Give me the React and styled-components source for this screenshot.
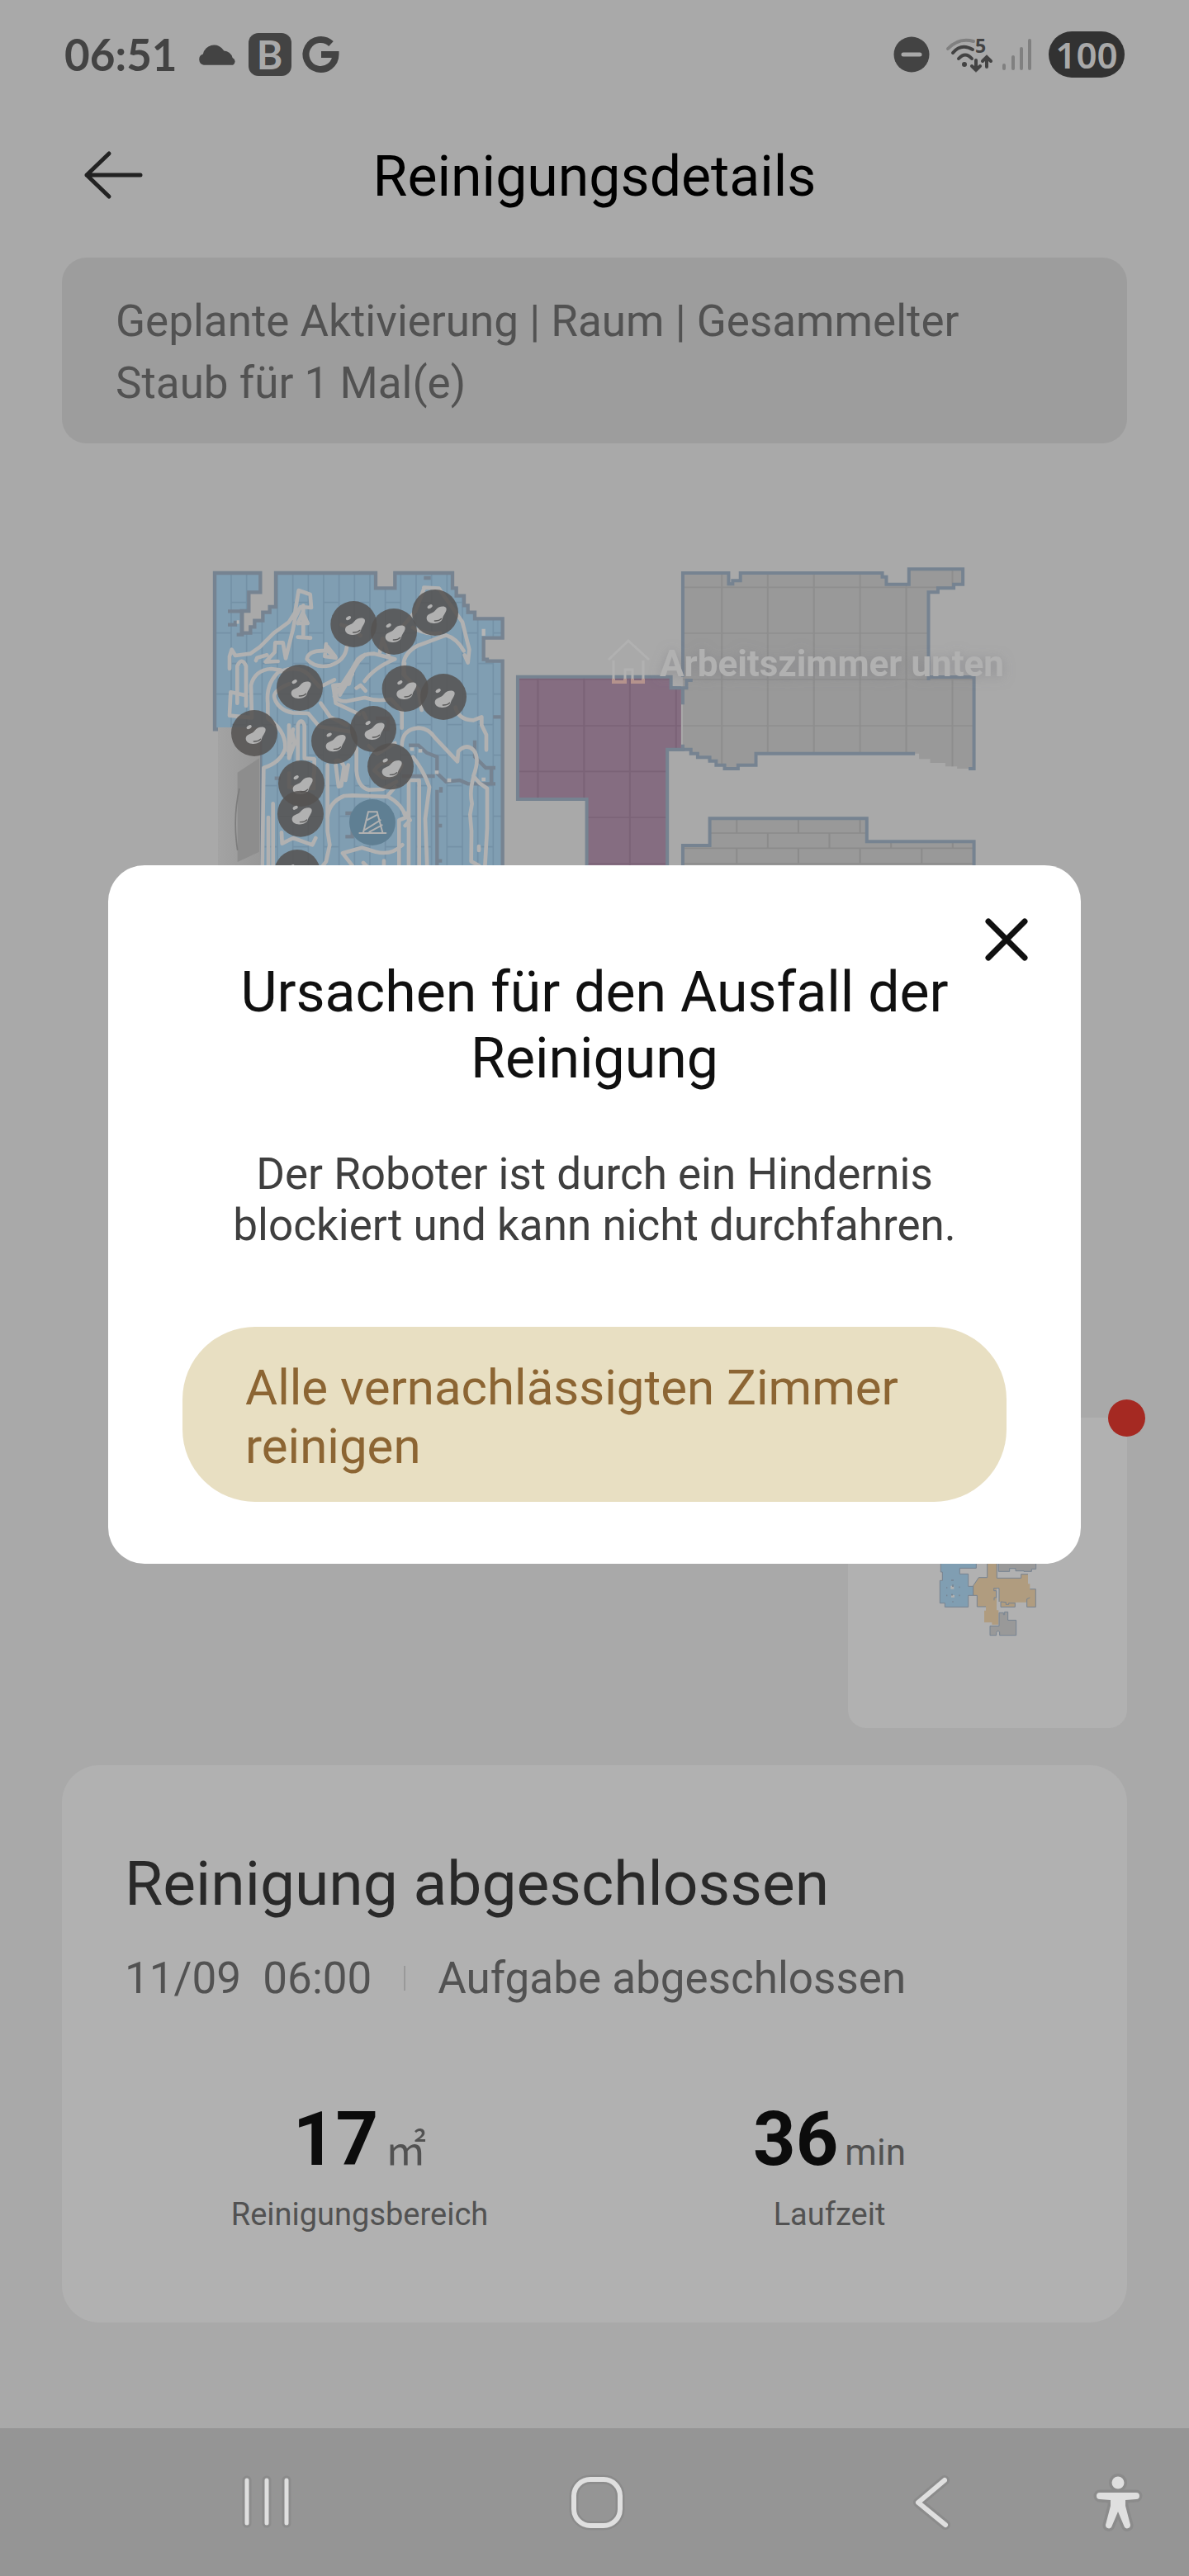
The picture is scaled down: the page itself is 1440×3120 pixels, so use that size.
import React from "react";
import styled, { createGlobalStyle } from "styled-components";

const GlobalStyle = createGlobalStyle`
  * { box-sizing: border-box; }
  body { margin: 0; background: #a9a9a9; font-family: Roboto, "Liberation Sans", sans-serif; }
  h1, h2, p, dl, dd, dt { margin: 0; font-weight: 400; }
  button { font: inherit; border: 0; padding: 0; background: none; cursor: pointer; }
  svg { display: block; overflow: visible; }
`;

const Screen = styled.div`
  position: relative;
  display: flex;
  flex-direction: column;
  min-height: 100vh;
  background: #a9a9a9;
`;

const StatusBar = styled.header`
  display: flex;
  align-items: center;
  justify-content: space-between;
  height: 132px;
  padding: 0 78px;
  color: #434343;
`;

const StatusGroup = styled.div`
  display: flex;
  align-items: center;
  gap: ${(p) => p.$gap}px;
`;

const Clock = styled.time`
  font: 700 53px/60px Lato, sans-serif;
  margin-right: 11px;
`;

const AppBadge = styled.span`
  display: grid;
  place-items: center;
  width: 52px;
  height: 52px;
  border-radius: 12px;
  background: #434343;
  color: #a9a9a9;
  font: 700 48px/52px Lato, sans-serif;
`;

const Battery = styled.span`
  display: grid;
  place-items: center;
  width: 92px;
  height: 56px;
  border-radius: 28px;
  background: #323232;
  color: #a9a9a9;
  font: 600 44px/56px "Noto Sans", sans-serif;
`;

const TitleBar = styled.div`
  display: grid;
  grid-template-columns: 72px 1fr 72px;
  align-items: center;
  height: 160px;
  margin-bottom: 20px;
  padding: 0 101px;
`;

const PageTitle = styled.h1`
  padding-top: 3px;
  text-align: center;
  font-size: 68px;
  line-height: 80px;
  color: #000;
`;

const Notice = styled.p`
  margin: 0 75px;
  padding: 40px 65px 35px;
  border-radius: 30px;
  background: #9d9d9d;
  color: #525252;
  font-size: 53px;
  line-height: 75px;
`;

const MapArea = styled.div`
  svg { width: 100%; height: auto; overflow: hidden; }
`;

const ThumbRow = styled.div`
  display: flex;
  justify-content: flex-end;
  margin: 0 75px 45px;
`;

const Thumb = styled.button`
  position: relative;
  width: 338px;
  height: 376px;
  border-radius: 22px;
  background: #b1b1b1;
`;

const Dot = styled.span`
  position: absolute;
  top: -22px;
  right: -22px;
  width: 45px;
  height: 45px;
  border-radius: 50%;
  background: #a52922;
`;

const Summary = styled.section`
  margin: 0 75px 128px;
  padding: 93px 76px 108px;
  border-radius: 45px;
  background: #b1b1b1;
`;

const SummaryTitle = styled.h2`
  font-size: 75px;
  line-height: 100px;
  color: #292929;
`;

const Meta = styled.div`
  display: flex;
  align-items: center;
  margin-top: 34px;
  font-size: 53px;
  line-height: 62px;
  color: #525252;
  white-space: pre;
`;

const Divider = styled.span`
  width: 2px;
  height: 30px;
  margin: 0 39px;
  background: #999;
`;

const Stats = styled.dl`
  display: grid;
  grid-template-columns: 1fr 1fr;
  margin-top: 112px;
`;

const Stat = styled.div`
  display: flex;
  flex-direction: column-reverse;
  align-items: center;
`;

const StatLabel = styled.dt`
  margin-top: 14px;
  font-size: 38px;
  line-height: 46px;
  color: #525252;
`;

const StatValue = styled.dd`
  display: flex;
  align-items: baseline;
  gap: 8px;
  font-size: 90px;
  line-height: 106px;
  font-weight: 700;
  color: #0c0c0c;
`;

const Unit = styled.span`
  font-family: Roboto, "Noto Sans CJK JP", sans-serif;
  font-size: ${(p) => (p.$symbol ? 50 : 44)}px;
  line-height: 50px;
  font-weight: 400;
  color: #525252;
`;

const NavBar = styled.nav`
  display: grid;
  grid-template-columns: 353px 1fr 353px;
  align-items: center;
  height: 180px;
  margin-top: auto;
  background: #959595;
`;

const NavSlot = styled.div`
  display: flex;
  justify-content: ${(p) => p.$justify};
  gap: 172px;
  padding: ${(p) => p.$pad};
`;

const Scrim = styled.div`
  position: absolute;
  inset: 0 0 180px;
  display: grid;
  align-items: center;
  padding: 0 131px;
`;

const Dialog = styled.section`
  position: relative;
  padding: 114px 90px 75px;
  border-radius: 44px;
  background: #fff;
  text-align: center;
`;

const Close = styled.button`
  position: absolute;
  top: 62px;
  right: 62px;
`;

const DialogTitle = styled.h2`
  font-size: 68px;
  line-height: 80px;
  color: #101010;
`;

const DialogText = styled.p`
  margin: 69px 0 92px;
  font-size: 53px;
  line-height: 62px;
  color: #3f3f3f;
`;

const Action = styled.button`
  && {
    width: 100%;
    padding: 38px 76px 32px;
    border-radius: 88px;
    background: #e8dfc2;
    color: #8c6533;
    font-size: 60px;
    line-height: 71px;
    text-align: left;
  }
`;

const wall = "#768391";
const track = "#b1b1b1";

const stains = [
  [565, 258], [711, 285], [861, 216], [369, 489], [752, 492], [891, 522], [204, 654],
  [495, 682], [636, 639], [699, 775], [375, 837], [372, 947], [360, 1161],
];

const tracks = [
  "M114 420L114 375L122 350L135 372L190 365L225 340L275 290L330 250L352 215L365 135L407 150L411 198L372 195L352 235L345 275L318 382L308 325L280 325L278 360L245 395L290 393M210 390L214 380L250 370",
  "M382 190L382 300M362 255L380 215L398 255L362 255M362 305L408 308",
  "M142 545L142 410Q158 375 174 410L174 555M114 590L118 505L174 517M114 590L195 598L192 480Q205 425 265 420L300 425Q245 470 253 545L253 600Q320 645 316 710Q300 760 238 780L233 1140",
  "M300 430Q360 405 400 440L440 485M330 475Q270 500 277 525Q290 570 345 580L400 582L440 630Q500 640 560 650M445 545L480 595L540 625M455 480L495 460",
  "M540 340Q535 390 480 408Q425 420 395 385Q400 350 470 355L500 380L460 375L465 330M470 340L498 375",
  "M495 520L560 420L580 385Q600 365 640 365L715 385Q640 415 605 465M605 370Q560 410 548 475L490 480L500 545L585 585M500 490Q490 540 540 538L605 525Q650 540 700 530L740 575L740 635M575 490L590 480L608 500M560 440L515 515M660 360L670 310L695 380M520 260Q560 270 590 300",
  "M820 125L875 128L900 165L960 250L985 350L980 398L968 370M820 130L790 210L740 270M750 440Q730 370 800 335L900 298Q940 310 965 355M780 270Q830 300 880 290M750 400L745 440L800 495L812 570",
  "M935 560Q945 605 1000 607L1030 595L1030 625L1047 660L1047 715M740 700Q740 640 800 635Q835 635 860 670L942 757L945 720Q975 690 1000 715Q1025 745 1000 810L1022 835L1050 855L1050 1000L1042 1140M1000 815Q985 870 995 910L988 950L993 1010L992 1120L1020 1135M1020 1065L1020 1080",
  "M330 625L330 745L350 690L342 650M362 750L362 625Q374 595 386 625L386 745L422 748L422 800M345 640L328 720M470 770L470 1010L478 1060L465 1120L450 1140M500 755Q515 745 530 775L520 845L510 848L500 770M545 770L535 825M575 710L575 790Q580 850 620 860L670 858L720 830",
  "M272 910L272 1140M255 960L255 1140M303 1015L305 1055L345 1035L415 1060L427 1035M470 960Q475 905 530 882L560 880L690 885Q740 910 755 960L730 970L730 1140M690 880L715 850M755 945L770 970L752 990M765 830L765 1140M765 825L803 825L803 1140M780 740Q820 790 840 850L825 965L832 1140M742 1060Q700 1100 645 1085L595 1070L525 1090L560 1135M600 1125L615 1140M675 1118L675 1140",
  "M640 790Q670 740 740 770Q720 820 670 815L640 790M330 800L330 850L420 855L420 800M600 580L610 600M620 700L650 730L715 690",
];

const planks = [];
for (let c = 0; c < 19; c += 1) {
  const x = 64 + c * 56;
  planks.push(`M${x} 70V1140`);
  for (let r = 1; r < 10; r += 1) {
    if ((c + r) % 2 === 0) planks.push(`M${x} ${68 + r * 111}h56`);
  }
}

const bricks = [];
[[964, 1017, 716], [1017, 1072, 808], [1072, 1128, 716]].forEach(([top, bottom, start]) => {
  bricks.push(`M556 ${bottom}H1420`);
  for (let x = start; x < 1420; x += 183) bricks.push(`M${x} ${top}V${bottom}`);
});

const blueRoom =
  "M60 640V72H226V142H184V210H158V290H190V268H205V245H235V215H260V195H282V72H645V127H715V72H924V127H938V155H966V190H980V215H1005V238H1106V308H1037V386H1050V392H1106V1150H225V640Z";
const greyRoom =
  "M556 713V72H692V105H727V72H1148V86H1160V113H1227V58H1387V113H1360V127H1313V142H1285V450H1420V783H1370V775H1335V762H1290V748H1257V728H773V770H720V783H680V770H655V755H630V742H600V728H580V713Z";
const greyWalls =
  "M556 449V72H692V112H704V100H727V72H1148V86H1160V113H1227V58H1387V113H1360V127H1313V142H1285V462M1285 450H1420V783H1404M1245 728H773V770H720V783H680V770H655V755H636V742H600V728H580V713H510M556 490V550M521 490H567V462H585";
const purpleRoom = "M66 449H521V490H551V713H510V1150H271V894H66Z";
const lowerRoom = "M556 1150V1062H636V964H1102V1048H1420V1150Z";

function Stain({ x, y }) {
  return (
    <g transform={`translate(${x} ${y})`}>
      <circle r="84" fill="#555352" fillOpacity=".86" />
      <ellipse cx="-19" cy="-22" rx="10" ry="6" transform="rotate(-30 -19 -22)" fill={track} />
      <path d="M2-10C10-22 34-27 40-17C45-6 30 8 27 20C24 34 6 41-10 38C-26 37-34 24-30 14C-26 2-8 4 2-10Z" fill={track} />
      <path d="M-2 30Q14 31 23 22" stroke="#5b5b5b" strokeWidth="4" fill="none" strokeLinecap="round" />
    </g>
  );
}

function FloorMap() {
  return (
    <svg viewBox="0 537 1440 1180" role="img" aria-label="Karte">
      <defs>
        <clipPath id="blue"><path d={blueRoom} /></clipPath>
        <clipPath id="grey"><path d={greyRoom} /></clipPath>
        <clipPath id="purple"><path d={purpleRoom} /></clipPath>
        <clipPath id="lower"><path d={lowerRoom} /></clipPath>
        <linearGradient id="slab">
          <stop offset="0" stopColor="#a3a3a3" />
          <stop offset="1" stopColor="#989898" />
        </linearGradient>
        <filter id="soft" x="-10%" y="-40%" width="120%" height="180%">
          <feDropShadow dx="0" dy="2" stdDeviation="7" floodColor="#77777f" floodOpacity=".5" />
        </filter>
      </defs>
      <g transform="translate(240 670) scale(.33333)" fill="none">
        <path d={blueRoom} fill="#809eb2" />
        <path d={planks.join("")} clipPath="url(#blue)" stroke="#7491a6" strokeWidth="5" />
        <path d={blueRoom} stroke={wall} strokeWidth="13" />
        <path d="M108 211H160V296H140M108 260H135V245M820 90H845M1072 595H1100M765 698H800L830 725L868 740V800L900 830L950 825L980 838H1080M1005 680V740L1045 780H1080M1065 780V838M868 860V1140M740 810H860M882 850V870M868 990H886M868 1118H886M278 818H300M645 600H690V640H670M535 945H560V1030H535" stroke={wall} strokeWidth="13" />
        <path d="M140 250h9M770 712h14M800 718h14M860 796h14M905 825h14M1030 822h14M1037 275V300" stroke="#b5b5b5" strokeWidth="13" />
        <path d="M72 633H225V1150H72Z" fill="url(#slab)" />
        <path d="M143 797L222 745V1085L143 1122Z" fill="#8d8d8d" />
        <path d="M150 855Q125 960 143 1080" stroke="#7c7c7c" strokeWidth="5" />
        <g stroke={track} strokeWidth="14" strokeLinecap="round" strokeLinejoin="round">
          {tracks.map((d) => <path key={d} d={d} />)}
        </g>
        <circle cx="633" cy="978" r="84" fill="#5f7f93" />
        <path d="M586 1017H682M600 1015L618 940H650L670 1015M613 970L652 950M606 1005L662 970M622 1013L668 988" stroke={track} strokeWidth="6" strokeLinecap="round" />
        {stains.map(([x, y]) => <Stain key={`${x}-${y}`} x={x} y={y} />)}
      </g>
      <g transform="translate(600 670) scale(.40816 .33333)" fill="none" strokeWidth="4">
        <path d={greyRoom} fill="#999" />
        <path d="M672 50V800M808 50V800M945 50V800M1082 50V800M1219 50V800M1356 50V800M550 124H1430M550 291H1430M550 459H1430M550 627H1430" clipPath="url(#grey)" stroke="#8e8e8e" strokeWidth="5" />
        <path d={greyWalls} stroke={wall} vectorEffect="non-scaling-stroke" />
        <path d={purpleRoom} fill="#856d81" />
        <path d="M126 440V900M263 440V900M399 440V1140M536 440V720M60 459H551M60 627H551M60 793H551M260 960H551M260 1128H551" clipPath="url(#purple)" stroke="#7b6377" strokeWidth="5" />
        <path d="M551 490H521V449H66V894H271V1150M510 1150V713H556V695" stroke={wall} vectorEffect="non-scaling-stroke" />
        <path d={lowerRoom} fill="#999" />
        <path d={bricks.join("")} clipPath="url(#lower)" stroke="#8b8b8b" strokeWidth="5" />
        <path d={lowerRoom} stroke={wall} vectorEffect="non-scaling-stroke" />
      </g>
      <path d="M737 799L761 776L786 799M743 800V826H757V811H766V826H779V800" fill="none" stroke={track} strokeWidth="3" />
      <path d="M743 822V826H757V822M766 822V826H779V822" fill="none" stroke="#b5938d" strokeWidth="4" />
      <text x="799" y="819" fontFamily="Roboto, sans-serif" fontWeight="700" fontSize="44" fill={track} filter="url(#soft)">
        Arbeitszimmer unten
      </text>
    </svg>
  );
}

function MiniMap() {
  return (
    <svg width="338" height="376" viewBox="81 111 1014 1128" stroke={wall} strokeWidth="3">
      <path fill="#809eb2" d="M418 560V672H424V703H415V785H433V799H518V757H536V724H518V679H487V658H547V560Z" />
      <path fill="#b09c7f" stroke="none" d="M587 560V692H556L536 722V757H550V798H582V812H576V855H604V863H628V811H621V731H630V780H636V798H690V782H731V799H763V734H742V715H735V680H710V694H622V560Z" />
      <path fill="none" d="M587 640V692H556L536 722V757H550V798H582M622 640V694H710V680H735M742 734H763V799H731V770L742 765M630 780V731H611V740H620V765H612V775M636 780V799H688V785H665V790H655V782Z" />
      <path fill="#999" d="M628 560V670H668V659H690V668H720V670H748V661H764V560Z" />
      <path fill="#999" d="M630 820H646V827H650V817H662V847H692V902H632V890L626 885L620 892V902H597V868H630Z" />
      <path d="M454 722h12v12h-12zM456 756h12v8h-12z" fill="#b1b1b1" stroke="none" />
      <path d="M456 702h9M462 718v8M438 729h4M484 727h4M438 757h4M484 757h4M460 780h4M456 755h6" strokeWidth="5" />
    </svg>
  );
}

export default function App() {
  return (
    <Screen>
      <GlobalStyle />
      <StatusBar>
        <StatusGroup $gap={14}>
          <Clock>06:51</Clock>
          <svg width="47" height="28" viewBox="0 0 48 28" fill="#434343" aria-hidden="true">
            <path d="M7 27A7 7 0 0 1 6 13.500A14 14 0 0 1 32 9.500A11 11 0 0 1 42.500 18A5 5 0 0 1 43 27Z" />
          </svg>
          <AppBadge>B</AppBadge>
          <svg width="44" height="44" viewBox="0 0 44 44" fill="none" stroke="#434343" strokeWidth="8" aria-hidden="true">
            <path d="M34 9A18 18 0 1 0 39.500 22H22" />
          </svg>
        </StatusGroup>
        <StatusGroup $gap={20}>
          <svg width="44" height="44" viewBox="0 0 44 44" aria-hidden="true">
            <circle cx="22" cy="22" r="21.500" fill="#434343" />
            <path d="M12 22H32" stroke="#a9a9a9" strokeWidth="5" strokeLinecap="round" />
          </svg>
          <StatusGroup $gap={12}>
            <svg width="56" height="44" viewBox="0 0 56 44" fill="none" strokeWidth="4" strokeLinecap="round" aria-hidden="true">
              <path d="M2 15Q15 1 33 6" stroke="#808080" />
              <path d="M8 20Q18 8 32 16M15 27Q23 18 31 27" stroke="#434343" />
              <path d="M36 29V41M31 36L36 41L41 36M49 37V25M44 30L49 25L54 30" stroke="#434343" />
              <circle cx="22" cy="34" r="3" fill="#434343" />
              <text x="35" y="20" fontFamily="Noto Sans, sans-serif" fontWeight="700" fontSize="23" fill="#434343">5</text>
            </svg>
            <svg width="36" height="40" viewBox="0 0 36 40" stroke="#808080" strokeWidth="4" strokeLinecap="round" aria-hidden="true">
              <path d="M2 33V37M13 23V37M23 13V37M33 3V37" />
            </svg>
          </StatusGroup>
          <Battery>100</Battery>
        </StatusGroup>
      </StatusBar>

      <TitleBar>
        <button type="button" aria-label="Zurück">
          <svg width="72" height="58" viewBox="0 0 72 58" fill="none" stroke="#222" strokeWidth="5" strokeLinecap="round" strokeLinejoin="round">
            <path d="M31 3L4 29L31 55M4 29H69" />
          </svg>
        </button>
        <PageTitle>Reinigungsdetails</PageTitle>
      </TitleBar>

      <Notice>Geplante Aktivierung | Raum | Gesammelter Staub für 1 Mal(e)</Notice>

      <MapArea><FloorMap /></MapArea>

      <ThumbRow>
        <Thumb type="button" aria-label="Kartenübersicht">
          <MiniMap />
          <Dot />
        </Thumb>
      </ThumbRow>

      <Summary>
        <SummaryTitle>Reinigung abgeschlossen</SummaryTitle>
        <Meta>
          <span>11/09  06:00</span>
          <Divider />
          <span>Aufgabe abgeschlossen</span>
        </Meta>
        <Stats>
          <Stat>
            <StatLabel>Reinigungsbereich</StatLabel>
            <StatValue>17<Unit $symbol>㎡</Unit></StatValue>
          </Stat>
          <Stat>
            <StatLabel>Laufzeit</StatLabel>
            <StatValue>36<Unit>min</Unit></StatValue>
          </Stat>
        </Stats>
      </Summary>

      <NavBar>
        <NavSlot $justify="flex-end" $pad="0">
          <button type="button" aria-label="Letzte Apps">
            <svg width="60" height="66" viewBox="0 0 60 66" strokeLinecap="round">
              <path d="M6 6V58M30 6V58M54 6V58" stroke="#8b8b8b" strokeWidth="11" />
              <path d="M6 6V58M30 6V58M54 6V58" stroke="#dfdfdf" strokeWidth="5" />
            </svg>
          </button>
        </NavSlot>
        <NavSlot $justify="center" $pad="0 0 0 6px">
          <button type="button" aria-label="Startseite">
            <svg width="68" height="68" viewBox="0 0 68 68" fill="none">
              <rect x="6" y="6" width="56" height="56" rx="20" stroke="#8b8b8b" strokeWidth="11" />
              <rect x="6" y="6" width="56" height="56" rx="20" stroke="#dfdfdf" strokeWidth="6" />
            </svg>
          </button>
        </NavSlot>
        <NavSlot $justify="flex-end" $pad="0 56px 0 0">
          <button type="button" aria-label="Zurück">
            <svg width="46" height="68" viewBox="0 0 46 68" fill="none" strokeLinecap="round" strokeLinejoin="round">
              <path d="M38 7L6 34L39 61" stroke="#8b8b8b" strokeWidth="12" />
              <path d="M38 7L6 34L39 61" stroke="#dfdfdf" strokeWidth="6" />
            </svg>
          </button>
          <button type="button" aria-label="Bedienungshilfen">
            <svg width="60" height="72" viewBox="0 0 60 72" strokeLinecap="round" strokeLinejoin="round" fill="#dfdfdf">
              <g stroke="#8b8b8b" strokeWidth="7">
                <circle cx="30" cy="12" r="7.500" />
                <path d="M8 24H52A4 4 0 0 1 52 32L39 33V40L45 63A4 4 0 0 1 38 66L30 47L22 66A4 4 0 0 1 15 63L21 40V33L8 32A4 4 0 0 1 8 24Z" />
              </g>
              <circle cx="30" cy="12" r="7.500" />
              <path d="M8 24H52A4 4 0 0 1 52 32L39 33V40L45 63A4 4 0 0 1 38 66L30 47L22 66A4 4 0 0 1 15 63L21 40V33L8 32A4 4 0 0 1 8 24Z" />
            </svg>
          </button>
        </NavSlot>
      </NavBar>

      <Scrim>
        <Dialog role="dialog" aria-modal="true" aria-labelledby="dialog-title">
          <Close type="button" aria-label="Schließen">
            <svg width="56" height="56" viewBox="0 0 56 56" stroke="#101010" strokeWidth="7" strokeLinecap="round">
              <path d="M6 6L50 50M50 6L6 50" />
            </svg>
          </Close>
          <DialogTitle id="dialog-title">Ursachen für den Ausfall der Reinigung</DialogTitle>
          <DialogText>Der Roboter ist durch ein Hindernis blockiert und kann nicht durchfahren.</DialogText>
          <Action type="button">Alle vernachlässigten Zimmer reinigen</Action>
        </Dialog>
      </Scrim>
    </Screen>
  );
}
